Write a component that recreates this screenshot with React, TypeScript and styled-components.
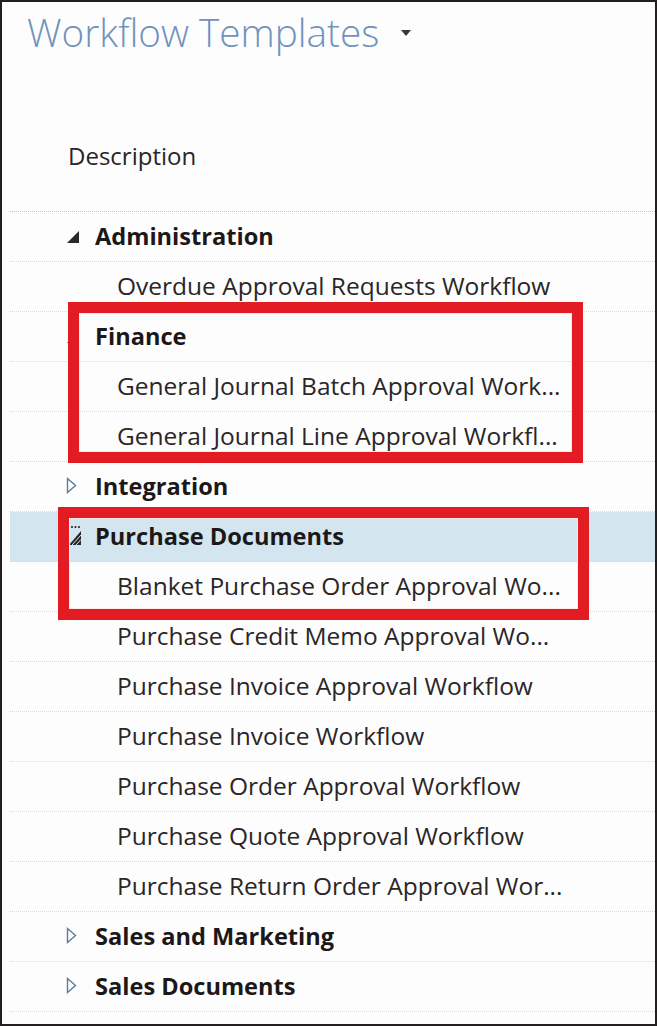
import React from "react";
import styled, { createGlobalStyle } from "styled-components";

const Global = createGlobalStyle`
  html, body { margin: 0; padding: 0; background: #fdfdfd; }
  body { font-family: "Open Sans", "Noto Sans", Arial, sans-serif; }
`;

const Frame = styled.div`
  position: relative;
  width: 657px;
  height: 1026px;
  box-sizing: border-box;
  border: 2px solid #231f20;
  background: #fdfdfd;
  overflow: hidden;
`;

const Header = styled.header`
  height: 209px;
  box-sizing: border-box;
  padding: 6px 0 0 25px;
  display: flex;
  flex-direction: column;
`;

const TitleRow = styled.div`
  display: flex;
  align-items: center;
  gap: 22px;
  height: 48px;
`;

const Title = styled.h1`
  margin: 0;
  font-family: "Open Sans", "Noto Sans", sans-serif;
  font-weight: 300;
  font-size: 38.7px;
  line-height: 48px;
  color: #6f93bd;
`;

const Caret = styled.svg`
  width: 10px;
  height: 6px;
  margin-top: 2px;
`;

const ColumnHead = styled.div`
  margin: 84px 0 0 41px;
  font-size: 24px;
  line-height: 32px;
  color: #2a2526;
`;

const List = styled.div`
  margin-left: 8px;
  border-top: 1px dotted #a9c9dc;
`;

const Row = styled.div<{ $level: number; $selected?: boolean }>`
  height: 50px;
  box-sizing: border-box;
  border-bottom: 1px dotted #dcd9d4;
  display: flex;
  align-items: center;
  padding-left: ${(p) => (p.$level === 0 ? 56 : 107)}px;
  padding-bottom: 2px;
  background: ${(p) => (p.$selected ? "#d3e6ef" : "transparent")};
`;

const IconSlot = styled.span`
  width: 29px;
  height: 22px;
  display: flex;
  align-items: center;
`;

const Label = styled.span<{ $bold?: boolean }>`
  font-size: ${(p) => (p.$bold ? 23.6 : 24.5)}px;
  font-weight: ${(p) => (p.$bold ? 700 : 400)};
  color: ${(p) => (p.$bold ? "#1c1819" : "#2a2628")};
  white-space: nowrap;
`;

const RedBox = styled.div`
  position: absolute;
  box-sizing: border-box;
  border: 11px solid #e31b23;
  box-shadow: inset 0 0 0 1px #fbe9e6;
  pointer-events: none;
`;

type Kind = "expanded" | "collapsed" | "focused";

const ExpandedIcon = () => (
  <svg width="14" height="14" viewBox="0 0 14 14" style={{ marginTop: 2 }}>
    <polygon points="13,1 13,13 1,13" fill="#2b2728" />
  </svg>
);

const CollapsedIcon = () => (
  <svg width="11" height="17" viewBox="0 0 11 17">
    <polygon points="1.5,1.5 9.5,8.5 1.5,15.5" fill="none" stroke="#5d7c9b" strokeWidth="1.4" />
  </svg>
);

const FocusedIcon = () => (
  <svg width="14" height="22" viewBox="0 0 14 22" style={{ marginLeft: 2 }}>
    <circle cx="4" cy="2" r="1.1" fill="#2b2728" />
    <circle cx="7.5" cy="2" r="1.1" fill="#2b2728" />
    <circle cx="11" cy="2" r="1.1" fill="#2b2728" />
    <polygon points="13,6 13,20 1,20" fill="#2b2728" />
    <line x1="4" y1="20" x2="13" y2="10" stroke="#d3e6ef" strokeWidth="1" />
    <line x1="8" y1="20" x2="13" y2="14.5" stroke="#d3e6ef" strokeWidth="1" />
  </svg>
);

const icons: Record<Kind, React.ReactNode> = {
  expanded: <ExpandedIcon />,
  collapsed: <CollapsedIcon />,
  focused: <FocusedIcon />,
};

type Item = { text: string; level: number; icon?: Kind; selected?: boolean };

const items: Item[] = [
  { text: "Administration", level: 0, icon: "expanded" },
  { text: "Overdue Approval Requests Workflow", level: 1 },
  { text: "Finance", level: 0, icon: "expanded" },
  { text: "General Journal Batch Approval Work...", level: 1 },
  { text: "General Journal Line Approval Workfl...", level: 1 },
  { text: "Integration", level: 0, icon: "collapsed" },
  { text: "Purchase Documents", level: 0, icon: "focused", selected: true },
  { text: "Blanket Purchase Order Approval Wo...", level: 1 },
  { text: "Purchase Credit Memo Approval Wo...", level: 1 },
  { text: "Purchase Invoice Approval Workflow", level: 1 },
  { text: "Purchase Invoice Workflow", level: 1 },
  { text: "Purchase Order Approval Workflow", level: 1 },
  { text: "Purchase Quote Approval Workflow", level: 1 },
  { text: "Purchase Return Order Approval Wor...", level: 1 },
  { text: "Sales and Marketing", level: 0, icon: "collapsed" },
  { text: "Sales Documents", level: 0, icon: "collapsed" },
];

const boxes = [
  { left: 66, top: 300, width: 515, height: 161 },
  { left: 56, top: 505, width: 531, height: 113 },
];

export default function App() {
  return (
    <>
      <Global />
      <Frame>
        <Header>
          <TitleRow>
            <Title>Workflow Templates</Title>
            <Caret viewBox="0 0 10 6">
              <polygon points="0,0 10,0 5,6" fill="#3a3436" />
            </Caret>
          </TitleRow>
          <ColumnHead>Description</ColumnHead>
        </Header>
        <List>
          {items.map((it, i) => (
            <Row key={i} $level={it.level} $selected={it.selected}>
              {it.level === 0 && <IconSlot>{it.icon && icons[it.icon]}</IconSlot>}
              <Label $bold={it.level === 0}>{it.text}</Label>
            </Row>
          ))}
        </List>
        {boxes.map((b, i) => (
          <RedBox
            key={i}
            style={{ left: b.left, top: b.top, width: b.width, height: b.height }}
          />
        ))}
      </Frame>
    </>
  );
}
